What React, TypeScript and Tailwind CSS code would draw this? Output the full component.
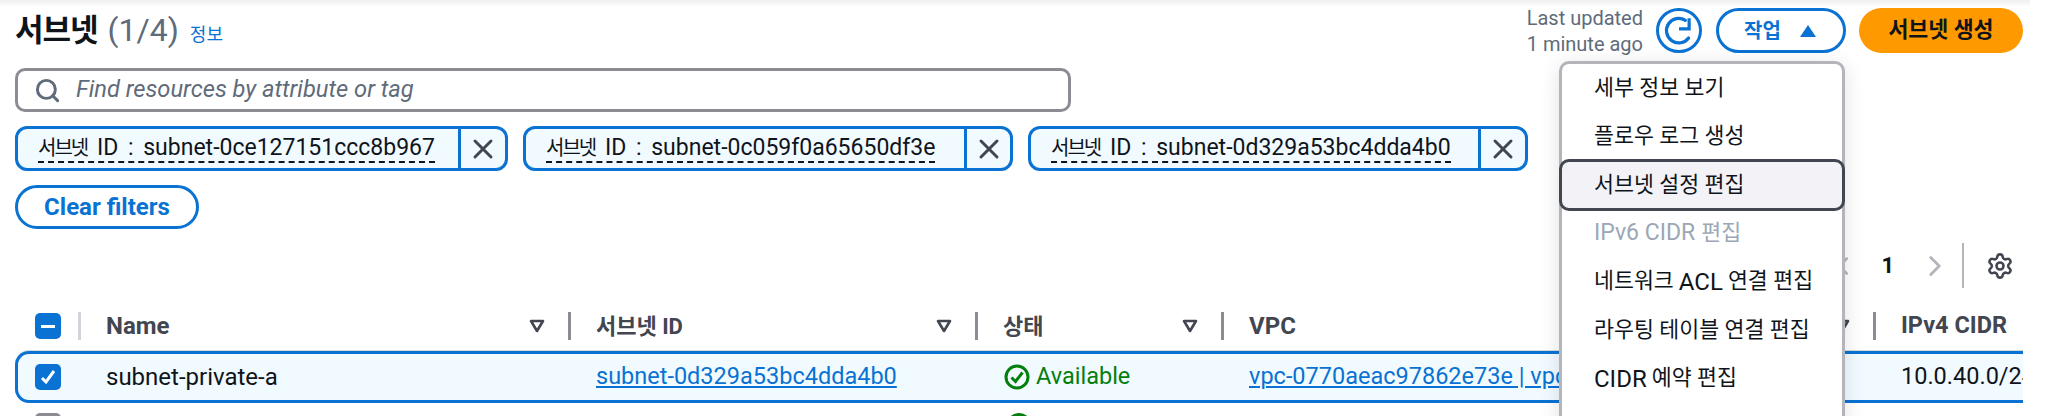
import { ChevronLeft, ChevronRight, Search, Settings, X } from "lucide-react";

const chips = [
  { id: "subnet-0ce127151ccc8b967", left: "w-[443px]", width: "w-[493px]" },
  { id: "subnet-0c059f0a65650df3e", left: "w-[441px]", width: "w-[490px]" },
  { id: "subnet-0d329a53bc4dda4b0", left: "w-[450px]", width: "w-[500px]" },
];

function FilterCaret() {
  return (
    <svg width="16" height="14" viewBox="0 0 16 14" className="shrink-0">
      <path d="M2 2h12L8 12z" fill="none" stroke="#424650" strokeWidth="2.6" strokeLinejoin="round" />
    </svg>
  );
}

function RefreshIcon() {
  return (
    <svg width="32" height="32" viewBox="0 0 30 30" fill="none" stroke="#0972d3" strokeWidth="3">
      <path d="M24 21.5A11.5 11.5 0 1 1 21 5" strokeLinecap="round" />
      <path d="M24.5 3v10h-9.5" strokeLinejoin="miter" />
    </svg>
  );
}

function HeaderCell({ label, caret = true }: { label: React.ReactNode; caret?: boolean }) {
  return (
    <div className="flex h-[28px] items-center overflow-hidden whitespace-nowrap border-l-[3px] border-[#8c8c94] pl-[25px] pr-[23px]">
      <span className="font-bold">{label}</span>
      {caret && <span className="ml-auto flex"><FilterCaret /></span>}
    </div>
  );
}

function MenuItem({ children, disabled = false }: { children: React.ReactNode; disabled?: boolean }) {
  return (
    <div className={disabled ? "flex h-[48.5px] items-center gap-[6px] pl-[32px] text-[#9ba7b6]" : "flex h-[48.5px] items-center gap-[5px] pl-[32px]"}>
      {children}
    </div>
  );
}

export default function App() {
  return (
    <div
      className="relative h-[416px] w-[2048px] overflow-hidden bg-white text-[22px] text-[#0f141a]"
      style={{ fontFamily: 'Roboto, "Noto Sans CJK KR", sans-serif' }}
    >
      <div className="absolute left-0 top-0 h-[7px] w-[2030px] bg-gradient-to-b from-[#efeff0] to-white" />

      <div className="pl-[15px] pr-[25px] pt-[8px]">
        <div className="flex h-[45px] items-center justify-between">
          <div className="flex items-baseline">
            <h1 className="text-[31px] font-bold tracking-[-1px]">서브넷</h1>
            <span className="ml-[10px] text-[32px] text-[#5f6b7a]">(1/4)</span>
            <a className="ml-[11px] text-[18px] text-[#0972d3]">정보</a>
          </div>
          <div className="flex items-center">
            <div className="text-right text-[20px] leading-[26px] text-[#5f6b7a]">
              <div>Last updated</div>
              <div>1 minute ago</div>
            </div>
            <button className="ml-[13px] flex h-[45px] w-[46px] items-center justify-center rounded-full border-[3px] border-[#0972d3]">
              <RefreshIcon />
            </button>
            <button className="ml-[14px] flex h-[45px] w-[130px] items-center rounded-full border-[3px] border-[#0972d3] pl-[25px] text-[20px] font-bold text-[#0972d3]">
              작업
              <svg width="18" height="14" viewBox="0 0 18 14" className="ml-[18px]">
                <path d="M9 1l8 12H1z" fill="#0972d3" />
              </svg>
            </button>
            <button className="ml-[13px] h-[45px] w-[164px] rounded-full bg-[#ff9900] text-[21.7px] font-bold">서브넷 생성</button>
          </div>
        </div>

        <div className="mt-[15px] flex h-[44px] w-[1056px] items-center rounded-[10px] border-[3px] border-[#8c8c94] pl-[16px]">
          <Search size={27} strokeWidth={2.6} className="text-[#5f6b7a]" />
          <span className="ml-[15px] text-[23.7px] italic text-[#5f6b7a]">Find resources by attribute or tag</span>
        </div>

        <div className="mt-[14px] flex gap-[15px]">
          {chips.map((chip) => (
            <div key={chip.id} className={`flex h-[45px] ${chip.width} rounded-[12px] border-[3px] border-[#0972d3] bg-[#f1faff]`}>
              <div className={`flex ${chip.left} items-center whitespace-nowrap border-r-[3px] border-[#0972d3] pl-[20px]`}>
                <span className="border-b-2 border-dashed border-[#0f141a] text-[23px] leading-[26px] [word-spacing:4px]">
                  <span className="text-[20px] tracking-[-2px]">서브넷</span> ID : {chip.id}
                </span>
              </div>
              <div className="flex flex-1 items-center justify-center">
                <X size={32} strokeWidth={2.2} className="text-[#424650]" />
              </div>
            </div>
          ))}
        </div>

        <button className="mt-[14px] block h-[44px] w-[184px] rounded-full border-[3px] border-[#0972d3] text-[24px] font-bold text-[#0972d3]">
          Clear filters
        </button>

        <div className="mt-[14px] flex h-[45px] items-center justify-end pr-[1px]">
          <ChevronLeft size={30} className="mr-[23px] text-[#b4b4bb]" />
          <span className="font-bold">1</span>
          <ChevronRight size={34} strokeWidth={2} className="ml-[24px] text-[#b4b4bb]" />
          <div className="ml-[10px] h-[45px] w-[2px] bg-[#b4b4bb]" />
          <Settings size={28} strokeWidth={2.2} className="ml-[22px] mr-[8px] text-[#424650]" />
        </div>

        <div className="mt-[24px] grid grid-cols-[63px_490px_407px_246px_652px_150px] text-[#424650]">
          <div className="flex h-[28px] items-center pl-[20px]">
            <div className="flex h-[26px] w-[26px] items-center justify-center rounded-[5px] bg-[#0972d3]">
              <div className="h-[3px] w-[14px] bg-white" />
            </div>
          </div>
          <div className="flex h-[28px] items-center whitespace-nowrap border-l-[3px] border-[#d1d5db] pl-[25px] pr-[23px]">
            <span className="text-[24px] font-bold">Name</span>
            <span className="ml-auto flex"><FilterCaret /></span>
          </div>
          <HeaderCell label="서브넷 ID" />
          <HeaderCell label="상태" />
          <HeaderCell label={<span className="text-[24px]">VPC</span>} />
          <HeaderCell label={<span className="text-[23.5px]">IPv4 CIDR</span>} caret={false} />
        </div>

        <div className="mt-[11px] grid h-[52px] grid-cols-[60px_490px_407px_246px_652px_150px] items-center overflow-hidden rounded-l-[14px] border-y-[3px] border-l-[3px] border-[#0972d3] bg-[#f1faff] text-[23.5px] shadow-[0_-1px_0_#d5dbdb]">
          <div className="pl-[17px]">
            <div className="flex h-[26px] w-[26px] items-center justify-center rounded-[5px] bg-[#0972d3]">
              <svg width="18" height="18" viewBox="0 0 18 18" fill="none" stroke="white" strokeWidth="3">
                <path d="M3 10l4 4 8-11" />
              </svg>
            </div>
          </div>
          <div className="pl-[28px] text-[24px]">subnet-private-a</div>
          <a className="pl-[28px] text-[#0972d3] underline">subnet-0d329a53bc4dda4b0</a>
          <div className="flex items-center pl-[29px] text-[#037f0c]">
            <svg width="26" height="26" viewBox="0 0 26 26" fill="none" stroke="#037f0c" strokeWidth="3">
              <circle cx="13" cy="13" r="11" />
              <path d="M7.5 13.5l4 4 7-9" />
            </svg>
            <span className="ml-[6px]">Available</span>
          </div>
          <a className="overflow-hidden whitespace-nowrap pl-[28px] text-[#0972d3] underline">vpc-0770aeac97862e73e | vpc</a>
          <div className="overflow-hidden whitespace-nowrap pl-[28px]">10.0.40.0/24</div>
        </div>

        <div className="mt-[10px] grid grid-cols-[63px_490px_407px_246px_652px_150px]">
          <div className="pl-[20px]">
            <div className="h-[26px] w-[26px] rounded-[5px] border-[3px] border-[#8c8c94]" />
          </div>
          <div />
          <div />
          <div className="pl-[31px]">
            <div className="h-[26px] w-[26px] rounded-full border-[3px] border-[#037f0c]" />
          </div>
        </div>
      </div>

      <div className="absolute left-[1559px] top-[61px] h-[400px] w-[286px] rounded-[10px] border-[3px] border-[#b4b4bb] bg-white text-[21.7px] shadow-[0_4px_20px_rgba(0,7,22,0.12)]">
        <MenuItem>세부 정보 보기</MenuItem>
        <MenuItem>플로우 로그 생성</MenuItem>
        <div className="relative -mx-[3px] -my-[2px] flex h-[52px] items-center rounded-[10px] border-[3px] border-[#424650] bg-[#f3f3f7] pl-[32px]">
          서브넷 설정 편집
        </div>
        <MenuItem disabled>
          <span className="text-[23px]">IPv6 CIDR</span> 편집
        </MenuItem>
        <MenuItem>
          네트워크 <span className="text-[24px]">ACL</span> 연결 편집
        </MenuItem>
        <MenuItem>라우팅 테이블 연결 편집</MenuItem>
        <MenuItem>
          <span className="text-[24px]">CIDR</span> 예약 편집
        </MenuItem>
      </div>
    </div>
  );
}
